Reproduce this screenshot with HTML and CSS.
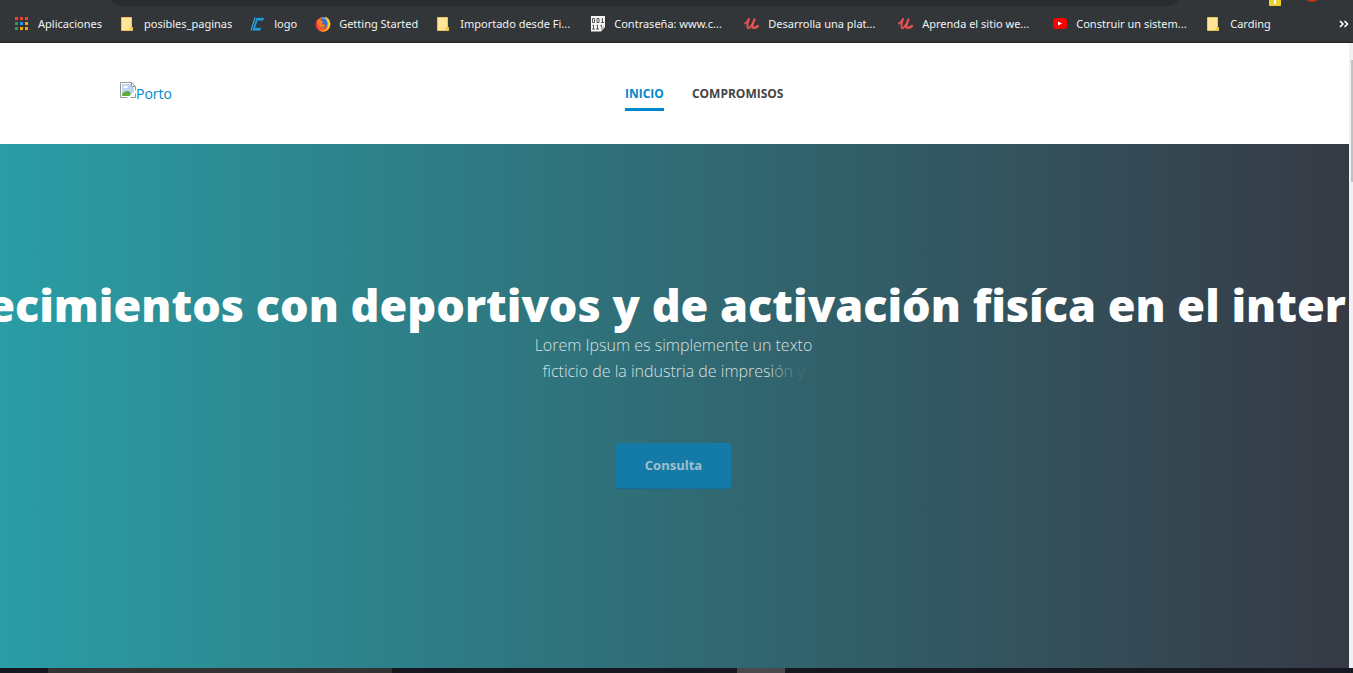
FILE: index.html
```html
<!DOCTYPE html>
<html lang="es">
<head>
<meta charset="utf-8">
<title>Porto</title>
<link rel="stylesheet" href="styles.css">
</head>
<body>
<svg class="defs" aria-hidden="true">
  <symbol id="folder" viewBox="0 0 14 16"><path d="M1.500 1.500h10v10h1v3h-11z" fill="#ffe595" stroke="#eac55a"/><path d="M10 11h2.500v3.500H9z" fill="#f3cc58"/></symbol>
  <symbol id="udemy" viewBox="0 0 16 14"><path d="M1 6.500Q3.500 5 5 1.800 3 8 3.500 10.500 4.500 13 8 7.500" fill="none" stroke="#ec5252" stroke-width="1.800" stroke-linecap="round" stroke-linejoin="round"/><path d="M10.500 2.500Q8 8 8.500 10.500 10 12 14 9" fill="none" stroke="#ec5252" stroke-width="2.200" stroke-linecap="round" stroke-linejoin="round"/></symbol>
</svg>
<nav class="browser" aria-label="Marcadores">
  <div class="omnibox"></div>
  <div class="badge"><i></i></div>
  <div class="avatar"></div>
  <a class="mark" href="#"><svg class="icon" viewBox="0 0 16 16"><path d="M1 1h3v3H1zM6 1h3v3H6zM11 1h3v3h-3z" fill="#ef4136"/><path d="M1 6h3v3H1zM1 11h3v3H1z" fill="#2f9e55"/><path d="M6 6h3v3H6z" fill="#2196f3"/><path d="M6 11h3v3H6zM11 6h3v3h-3zM11 11h3v3h-3z" fill="#f5a80b"/></svg><span>Aplicaciones</span></a>
  <a class="mark" href="#"><svg class="icon"><use href="#folder" width="14" height="16"/></svg><span>posibles_paginas</span></a>
  <a class="mark" href="#"><svg class="icon" viewBox="0 0 16 16"><path d="M4.500 1H15l-1.500 4H8l-2 6h6l-1.500 4H.5z" fill="#174a66"/><path d="M6.500 2H14l-1 2.500H7.500L5 12h6l-1 2.500H2.500z" fill="#2a9bd0"/><path d="M1 14.500 5 1.500" stroke="#4db4e2"/></svg><span>logo</span></a>
  <a class="mark" href="#"><svg class="icon" viewBox="0 0 16 16"><circle cx="8" cy="8.500" r="7.300" fill="#ff5a24"/><path d="M10 .5c5 2 6.500 7 4.500 11-2 4-7 5-10 3 5 1 8-1 8-5 0-3-2-4-2.500-9z" fill="#ffca28"/><path d="M1.500 5C0 9 2 14 6 15.500 3 13 2 9 3 7z" fill="#f52b55"/><circle cx="8" cy="7.500" r="4.600" fill="#2b6fd8"/><path d="M3 4c2-1 3 0 4 1l2 .8-2 1.200c1 2 3 2 4 1.500-1 3-5 4-7 1.500C2 8 2 6 3 4z" fill="#ff7a1d"/><path d="M5 2c3-2 7 0 7 3-2-2-4-2-7-3z" fill="#45a8f5"/></svg><span>Getting Started</span></a>
  <a class="mark long" href="#"><svg class="icon"><use href="#folder" width="14" height="16"/></svg><span>Importado desde Fi...</span></a>
  <a class="mark long" href="#"><svg class="icon" viewBox="0 0 16 16"><path d="M1 0h14v11l-4 4.500H1z" fill="#f4f4f4"/><path d="M2.500 2.500h2v4h-2zM7 2.500h2v4H7zM11.500 3l1-.5v4M11 6.500h3M2.500 9.500l1-.5v4M2 13h3M6.500 9.500l1-.5v4M6 13h3M10.500 9.500l1-.5v3" fill="none" stroke="#333" stroke-width=".8"/><path d="M11 11h4l-4 4.500z" fill="#b8b8b8"/></svg><span>Contraseña: www.c...</span></a>
  <a class="mark long" href="#"><svg class="icon"><use href="#udemy" width="16" height="14" y="1"/></svg><span>Desarrolla una plat...</span></a>
  <a class="mark long" href="#"><svg class="icon"><use href="#udemy" width="16" height="14" y="1"/></svg><span>Aprenda el sitio we...</span></a>
  <a class="mark long" href="#"><svg class="icon" viewBox="0 0 16 16"><rect x="1" y="2" width="14" height="11" rx="3" fill="#f00"/><path d="M6 5.500v4l4-2z" fill="#fff"/></svg><span>Construir un sistem...</span></a>
  <a class="mark" href="#"><svg class="icon"><use href="#folder" width="14" height="16"/></svg><span>Carding</span></a>
  <button class="more" aria-label="Más marcadores"><svg width="10" height="8" viewBox="0 0 10 8"><path d="M1 1l3 3-3 3M5.500 1l3 3-3 3" fill="none" stroke="#fff" stroke-width="1.600"/></svg></button>
</nav>
<div class="viewport">
  <div class="page">
    <header class="header">
      <a class="brand" href="#"><svg width="16" height="16" viewBox="0 0 16 16"><path d="M.5.500h11l4 4v11H.5z" fill="#fff" stroke="#999"/><path d="M2 2h9v3h3v9H2z" fill="#bfd3f3"/><path d="M3 6q0-2 2-2 2-1 3 2z" fill="#fff"/><path d="M2 14v-2q4-5 8-2l1 4z" fill="#5aae38"/><path d="M11.500.500v4h4z" fill="#eee" stroke="#999"/><path d="M7 16 16 8v3l-6 5z" fill="#fff"/></svg><span>Porto</span></a>
      <nav class="menu"><a class="link active" href="#">INICIO</a><a class="link" href="#">COMPROMISOS</a></nav>
    </header>
    <main class="hero">
      <h1 class="title">ecimientos con deportivos y de activación fisíca en el inter</h1>
      <p class="lead">Lorem Ipsum es simplemente un texto<br>ficticio de la industria de impresi<span class="fade-1">ó</span><span class="fade-2">n</span> <span class="fade-3">y</span></p>
      <button class="cta">Consulta</button>
    </main>
  </div>
  <div class="scroll"><div class="thumb"></div></div>
</div>
<footer class="taskbar"><div class="search"></div><div class="task"></div></footer>
</body>
</html>
```
FILE: styles.css
```css
* { box-sizing: border-box; }
body { margin: 0; height: 100vh; display: flex; flex-direction: column; overflow: hidden; font-family: "Open Sans", sans-serif; background: #fff; }
a { text-decoration: none; }
button { border: 0; font-family: inherit; }
.defs { position: absolute; width: 0; height: 0; }

.browser { position: relative; flex: none; display: flex; align-items: center; gap: 18px; height: 43px; padding: 6px 4px 0 14px; background: #323639; border-bottom: 1px solid #232428; overflow: hidden; }
.omnibox { position: absolute; top: -22px; left: 109px; right: 172px; height: 28px; border-radius: 14px; background: #282c2f; }
.badge { position: absolute; top: 0; right: 72px; width: 12px; height: 6px; border-radius: 0 0 1px 1px; background: #f0d030; display: flex; justify-content: center; }
.badge i { width: 2px; height: 4px; background: #fff; }
.avatar { position: absolute; top: -14px; right: 33px; width: 16px; height: 16px; border-radius: 50%; background: #c5340e; }
.mark { flex: none; display: flex; align-items: center; gap: 8px; color: #f1f3f4; font: 11px/16px "Noto Sans", sans-serif; white-space: nowrap; }
.long { min-width: 136px; }
.icon { width: 16px; height: 16px; }
.more { margin-left: auto; padding: 0; background: none; display: flex; }

.viewport { flex: 1; min-height: 0; display: flex; }
.page { flex: 1; min-width: 0; display: flex; flex-direction: column; }
.scroll { width: 4px; padding-top: 17px; background: #f1f1f1; }
.thumb { height: 122px; margin-left: 2px; background: #c1c1c1; }

.header { flex: none; display: grid; grid-template-columns: 505px 1fr; align-items: center; height: 101px; padding: 0 120px; }
.brand { display: flex; align-items: flex-start; color: #08c; font-size: 14px; line-height: 24px; }
.menu { display: flex; gap: 28px; padding-top: 8px; }
.link { padding-bottom: 4px; color: #444; font-size: 12px; font-weight: 700; line-height: 20px; border-bottom: 3px solid transparent; }
.active { color: #08c; border-color: #08c; }

.hero { flex: 1; display: flex; flex-direction: column; align-items: center; justify-content: center; overflow: hidden; padding: 0 2px 46px 0; background: linear-gradient(90deg, #2a9da5, #363a45); }
.title { margin: 0; padding-right: 14px; color: #fff; font-size: 45px; font-weight: 800; line-height: 54px; white-space: nowrap; }
.lead { margin: 0 0 59px; color: rgba(255, 255, 255, 0.8); font-size: 16px; font-weight: 300; line-height: 26px; text-align: center; }
.fade-1 { opacity: 0.6; }
.fade-2 { opacity: 0.3; }
.fade-3 { opacity: 0.1; }
.cta { height: 46px; padding: 0 29px; border-radius: 3px; background: #147ba8; border-bottom: 1px solid #146d94; color: #a0bfcc; font-size: 13px; font-weight: 700; }

.taskbar { flex: none; display: flex; height: 5px; padding-left: 48px; background: #17171f; }
.search { width: 344px; background: #333; }
.task { width: 48px; margin-left: 345px; background: #4a4a4d; }
```
